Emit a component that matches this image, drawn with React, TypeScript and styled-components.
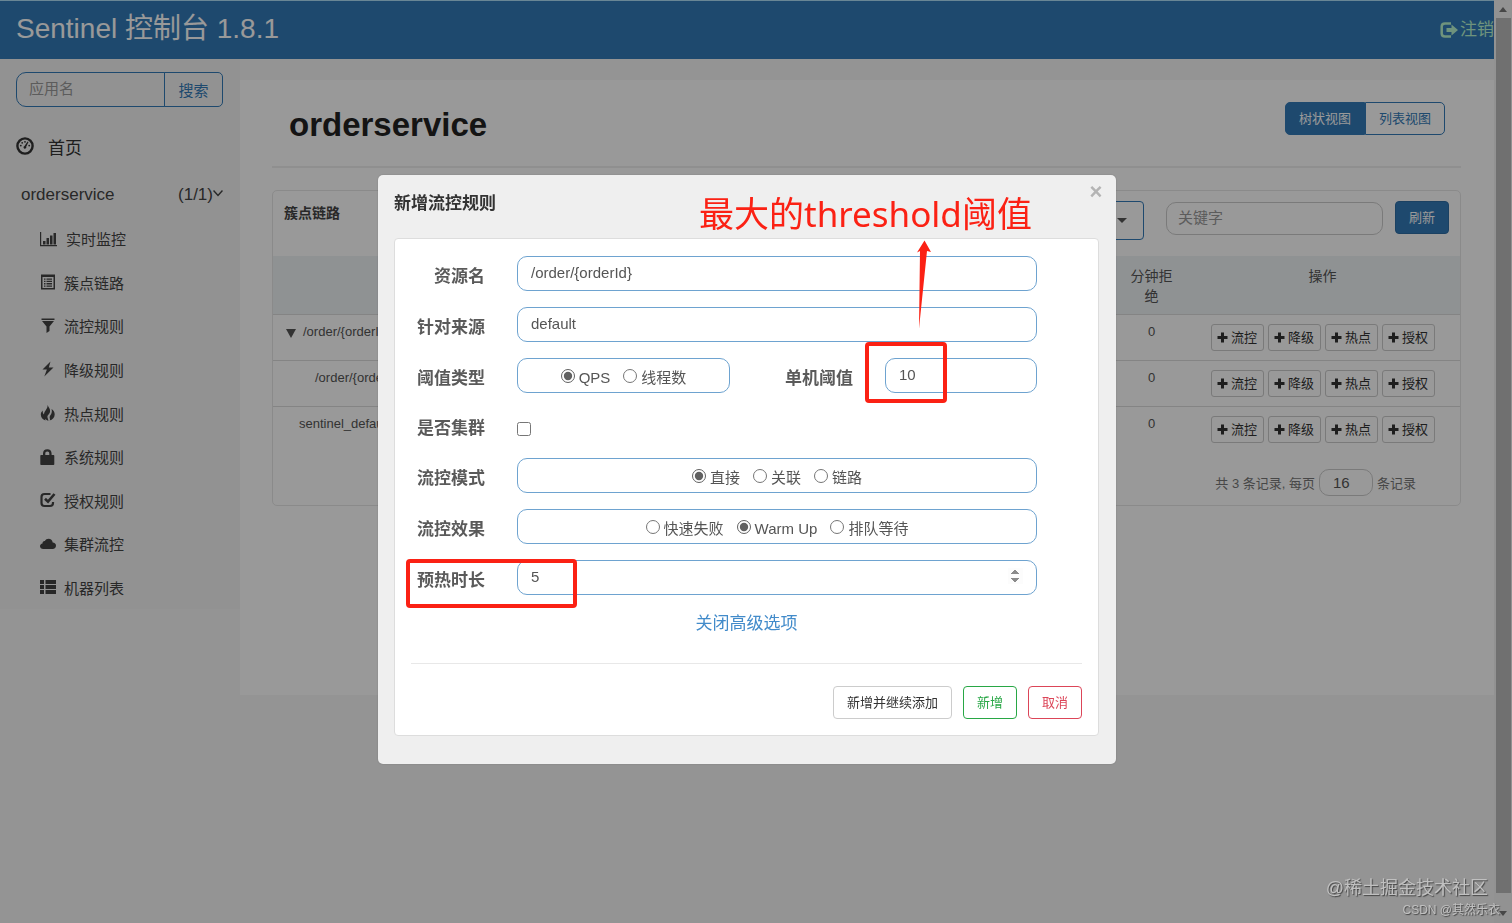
import React from "react";
import styled, { createGlobalStyle } from "styled-components";

const BLUE = "#337ab7";
const RED = "#fb2114";

const GlobalStyle = createGlobalStyle`
  * { box-sizing: border-box; }
  body {
    margin: 0;
    background: #f7f7f7;
    color: #333;
    font-family: "Liberation Sans", "Noto Sans CJK SC", sans-serif;
    font-size: 15px;
  }
  button, input, select { font-family: inherit; }
`;

/* ---------- icons ---------- */

const Icon = styled.svg<{ $size?: number }>`
  flex: none;
  display: block;
  width: ${(p) => p.$size ?? 16}px;
  height: ${(p) => p.$size ?? 16}px;
  fill: currentColor;
`;

const DashboardIcon = () => (
  <Icon $size={18} viewBox="0 0 18 18">
    <circle cx="9" cy="9" r="7.600" fill="none" stroke="currentColor" strokeWidth="2.400" />
    <circle cx="4.800" cy="8.600" r="0.900" />
    <circle cx="6.200" cy="5.800" r="0.900" />
    <circle cx="9" cy="4.800" r="0.900" />
    <circle cx="13.200" cy="8.600" r="0.900" />
    <path d="M11.600 4.600l.9.5-2.300 4.600a1.400 1.400 0 1 1-1.700-.8z" />
  </Icon>
);

const StatsIcon = () => (
  <Icon $size={18} viewBox="0 0 18 18">
    <path d="M0 2h1.200v13H17v1.200H0zM3 11h2.500v3.500H3zM6.500 8H9v6.500H6.500zM10 5.500h2.500v9H10zM13.500 3H16v11.500h-2.500z" />
  </Icon>
);

const ListAltIcon = () => (
  <Icon viewBox="0 0 16 16">
    <path
      fillRule="evenodd"
      d="M1 0.500h14v15H1zM2.500 3v11h11V3zM4 4.500h1.500v1.300H4zM6.500 4.500H12v1.300H6.500zM4 6.800h1.500v1.300H4zM6.500 6.800H12v1.300H6.500zM4 9.100h1.500v1.300H4zM6.500 9.100H12v1.300H6.500zM4 11.400h1.500v1.300H4zM6.500 11.400H12v1.300H6.500z"
    />
  </Icon>
);

const FilterIcon = () => (
  <Icon viewBox="0 0 16 16">
    <path d="M1.500 0.500h13v1.500H1.500zM2 3h12L9.500 8.500V13L6.500 15V8.500z" />
  </Icon>
);

const FlashIcon = () => (
  <Icon viewBox="0 0 16 16">
    <path d="M10.500 0.500L2.500 8.600h4.400L4.300 15.500 13.500 6.400H8.800z" />
  </Icon>
);

const FireIcon = () => (
  <Icon viewBox="0 0 16 16">
    <path d="M7.500 0C9 3 10.500 4 10 7c-.5 2.500-3 3-2.500 5.500.2 1.200.8 2 1 3.200-1.500-.3-2.500-1-3-2-.3.6-.2 1 0 1.700C2.500 14.500.8 12.300.8 9.500.8 8 1.500 6.600 2.800 5.500c-.2 2 .2 3.200 1.200 4C4 6 8 4 7.500 0z" />
    <path d="M11.500 4c2 1 3.200 3 3.200 5.300 0 3.200-2 5.500-5.200 6.200.8-.6.5-1.800.2-2.600-.4-1.600.6-2.500 1.500-4 .8-1.500.8-3.200.3-4.900z" />
  </Icon>
);

const LockIcon = () => (
  <Icon viewBox="0 0 16 16">
    <path d="M3 6V4.500C3 1.800 4.600.3 7.300.3s4.300 1.500 4.300 4.200V6h1.900c.5 0 .8.300.8.800v8.400c0 .5-.3.800-.8.800H1.100c-.5 0-.8-.3-.8-.8V6.800c0-.5.3-.8.8-.8zm2.300 0h4V4.600c0-1.400-.7-2.100-2-2.100s-2 .7-2 2.100z" />
  </Icon>
);

const CheckIcon = () => (
  <Icon viewBox="0 0 16 16">
    <path
      d="M10.500 2H4.500C2.500 2 1.500 3 1.500 5v6c0 2 1 3 3 3H10c2 0 3-1 3-3V10"
      fill="none"
      stroke="currentColor"
      strokeWidth="2.200"
    />
    <path d="M5 6.800l3 2.900L14.500 2" fill="none" stroke="currentColor" strokeWidth="2.600" />
  </Icon>
);

const CloudIcon = () => (
  <Icon viewBox="0 0 16 16">
    <path d="M3.200 13C1.400 13 0 11.800 0 10.200c0-1.500 1-2.600 2.500-2.800C2.400 5.700 3.600 4.700 4.900 5 5.700 3.500 7 2.700 8.500 2.700c2.300 0 4 1.600 4.200 3.900 1.900 0 3.300 1.300 3.300 3.100S14.600 13 12.700 13z" />
  </Icon>
);

const ThListIcon = () => (
  <Icon viewBox="0 0 16 16">
    <path d="M0 1h4v4H0zM5.500 1H16v4H5.500zM0 6h4v4H0zM5.500 6H16v4H5.500zM0 11h4v4H0zM5.500 11H16v4H5.500z" />
  </Icon>
);

const LogoutIcon = () => (
  <Icon $size={18} viewBox="0 0 18 18">
    <path
      d="M11 2.500H5C3 2.500 1.700 3.500 1.700 5.500v7c0 2 1.300 3 3.300 3h6"
      fill="none"
      stroke="currentColor"
      strokeWidth="2.500"
    />
    <path d="M6.500 7h5V3.500L18 9l-6.500 5.500V11h-5z" />
  </Icon>
);

const PlusIcon = () => (
  <Icon $size={11} viewBox="0 0 11 11">
    <path d="M4 0.500h3V4h3.500v3H7v3.500H4V7H0.500V4H4z" />
  </Icon>
);

const Chevron = styled.svg`
  width: 10px;
  height: 8px;
  margin-bottom: 5px;
  fill: none;
  stroke: currentColor;
  stroke-width: 1.5;
`;

/* ---------- page frame ---------- */

const Page = styled.div`
  min-height: 100vh;
  padding-right: 18px;
`;

const Header = styled.header`
  display: flex;
  justify-content: space-between;
  align-items: center;
  height: 59px;
  padding: 0 0 3px 16px;
  border-top: 1px solid #b0e0f8;
  background: ${BLUE};
`;

const Brand = styled.h1`
  margin: 0;
  font-size: 28px;
  font-weight: 400;
  line-height: 32px;
  color: #fff;
`;

const Logout = styled.a`
  display: flex;
  align-items: center;
  gap: 2px;
  padding-top: 2px;
  font-size: 17px;
  line-height: 24px;
  white-space: nowrap;
  color: #b9f5d0;
  text-decoration: none;
`;

const Body = styled.div`
  display: flex;
  align-items: flex-start;
`;

const Sidebar = styled.nav`
  flex: none;
  width: 240px;
  padding: 13px 17px 0 16px;
  background: #f4f4f4;
`;

const SearchGroup = styled.form`
  display: flex;
  height: 35px;
`;

const SearchInput = styled.input`
  flex: 1;
  min-width: 0;
  padding: 0 12px 2px;
  border: 1px solid ${BLUE};
  border-radius: 10px 0 0 10px;
  background: transparent;
  font-size: 15px;
  &::placeholder { color: #999; }
`;

const SearchButton = styled.button`
  width: 59px;
  margin-left: -1px;
  padding: 0;
  border: 1px solid ${BLUE};
  border-radius: 0 5px 5px 0;
  background: transparent;
  font-size: 15px;
  color: ${BLUE};
`;

const HomeLink = styled.a`
  display: flex;
  align-items: center;
  gap: 14px;
  height: 48px;
  margin-top: 15px;
  font-size: 17px;
  color: #333;
  text-decoration: none;
`;

const AppRow = styled.a`
  display: flex;
  justify-content: space-between;
  align-items: center;
  height: 47px;
  padding: 3px 0 0 5px;
  font-size: 17px;
  color: #444;
  text-decoration: none;
`;

const AppCount = styled.span`
  display: flex;
  align-items: center;
`;

const Menu = styled.ul`
  display: flex;
  flex-direction: column;
  height: 392px;
  margin: 0;
  padding: 0 0 0 24px;
  list-style: none;
`;

const MenuItem = styled.li`
  display: flex;
  flex: 1;
`;

const MenuLink = styled.a`
  display: flex;
  align-items: center;
  gap: 8px;
  font-size: 15px;
  color: #444;
  text-decoration: none;
`;

const Main = styled.main`
  flex: 1;
  min-width: 0;
  min-height: 615px;
  margin-top: 21px;
  padding: 0 33px 0 32px;
  background: #fff;
`;

const TitleBar = styled.div`
  display: flex;
  justify-content: space-between;
  align-items: flex-start;
  padding: 22px 16px 23px 17px;
  border-bottom: 2px solid #eee;
`;

const Title = styled.h2`
  margin: 0;
  padding-top: 5px;
  font-size: 33px;
  line-height: 36px;
  font-weight: 700;
  color: #222;
`;

const ViewSwitch = styled.div`
  display: flex;
`;

const ViewButton = styled.button<{ $active?: boolean }>`
  width: 80px;
  height: 33px;
  padding: 0 0 2px;
  border: 1px solid ${BLUE};
  border-radius: ${(p) => (p.$active ? "5px 0 0 5px" : "0 5px 5px 0")};
  background: ${(p) => (p.$active ? BLUE : "transparent")};
  color: ${(p) => (p.$active ? "#fff" : BLUE)};
  font-size: 13px;
`;

const Card = styled.section`
  margin-top: 22px;
  border: 1px solid #e7e7e7;
  border-radius: 5px;
`;

const Toolbar = styled.div`
  display: flex;
  align-items: flex-start;
  height: 65px;
  padding: 10px 11px 0;
`;

const CardTitle = styled.h3`
  flex: 1;
  margin: 0;
  font-size: 14px;
  line-height: 24px;
  color: #444;
`;

const SelectWrap = styled.label`
  display: grid;
  align-items: center;
  width: 260px;
  margin-right: 22px;
  > * { grid-area: 1 / 1; }
`;

const MachineSelect = styled.select`
  height: 39px;
  padding: 0 12px;
  border: 1px solid ${BLUE};
  border-radius: 4px;
  background: transparent;
  appearance: none;
  font-size: 15px;
  color: #444;
`;

const Caret = styled.svg`
  justify-self: end;
  width: 10px;
  height: 5px;
  margin-right: 17px;
  fill: #555;
  pointer-events: none;
`;

const KeywordInput = styled.input`
  width: 217px;
  height: 33px;
  margin: 1px 12px 0 0;
  padding: 0 11px 2px;
  border: 1px solid #ccc;
  border-radius: 10px;
  background: transparent;
  font-size: 15px;
  &::placeholder { color: #999; }
`;

const RefreshButton = styled.button`
  width: 54px;
  height: 33px;
  padding: 0 0 2px;
  border: 1px solid #2e6da4;
  border-radius: 4px;
  background: ${BLUE};
  color: #fff;
  font-size: 13px;
`;

const Table = styled.table`
  width: 100%;
  border-collapse: collapse;
  table-layout: fixed;
`;

const Th = styled.th<{ $width?: number }>`
  width: ${(p) => (p.$width ? `${p.$width}px` : "auto")};
  padding: 10px 12px 8px;
  background: #eff3f6;
  font-size: 14px;
  line-height: 20px;
  font-weight: 400;
  vertical-align: top;
  color: #555;
`;

const Td = styled.td<{ $indent?: number }>`
  height: 46px;
  padding: 7px 0 0 ${(p) => p.$indent ?? 0}px;
  border-top: 1px solid #ddd;
  font-size: 13px;
  line-height: 20px;
  text-align: ${(p) => (p.$indent ? "left" : "center")};
  vertical-align: top;
  white-space: nowrap;
  overflow: hidden;
  text-overflow: ellipsis;
  color: #555;
`;

const TreeToggle = styled.svg`
  width: 10px;
  height: 9px;
  margin: 0 7px 0 0;
  vertical-align: -2px;
  fill: #555;
`;

const Actions = styled.div`
  display: flex;
  justify-content: center;
  gap: 4px;
  padding-top: 2px;
`;

const ActionButton = styled.button`
  display: flex;
  align-items: center;
  justify-content: center;
  gap: 3px;
  width: 53px;
  height: 27px;
  padding: 0;
  border: 1px solid #ccc;
  border-radius: 3px;
  background: transparent;
  font-size: 13px;
  line-height: 18px;
  color: #333;
`;

const Pager = styled.div`
  display: flex;
  justify-content: flex-end;
  align-items: center;
  gap: 4px;
  padding: 16px 44px 9px 0;
  font-size: 13px;
  color: #777;
`;

const PageSizeInput = styled.input`
  width: 54px;
  height: 27px;
  padding: 0 13px;
  border: 1px solid #ccc;
  border-radius: 10px;
  background: transparent;
  font-size: 15px;
  color: #555;
`;

/* ---------- browser scroll bar ---------- */

const ScrollTrack = styled.div`
  position: fixed;
  inset: 0 0 0 auto;
  display: flex;
  flex-direction: column;
  align-items: center;
  justify-content: space-between;
  width: 18px;
  padding: 7px 0;
  background: #f4f4f4;
`;

const ScrollThumb = styled.div`
  flex: 1;
  width: 15px;
  margin: 6px 0 18px;
  background: #bbb;
`;

const ScrollArrow = styled.svg`
  width: 8px;
  height: 5px;
  fill: #777;
`;

/* ---------- dialog ---------- */

const Backdrop = styled.div`
  position: fixed;
  inset: 0;
  display: flex;
  align-items: flex-start;
  justify-content: center;
  padding: 175px 18px 0 0;
  background: rgba(0, 0, 0, 0.4);
`;

const Dialog = styled.div`
  position: relative;
  width: 738px;
  padding: 16px 17px 28px 16px;
  border-radius: 5px;
  background: #efefef;
  box-shadow: 0 0 2px rgba(0, 0, 0, 0.2);
`;

const DialogTitle = styled.h2`
  margin: 0 0 22px;
  font-size: 17px;
  line-height: 25px;
  color: #333;
`;

const CloseButton = styled.button`
  position: absolute;
  top: 8px;
  right: 11px;
  width: 18px;
  height: 18px;
  padding: 0;
  border: 0;
  background: none;
  color: #b4b4b4;
  font-size: 22px;
  line-height: 18px;
  font-weight: 700;
`;

const Panel = styled.form`
  padding: 17px 16px 16px;
  border: 1px solid #ddd;
  border-radius: 4px;
  background: #fff;
`;

const Fields = styled.div`
  display: flex;
  flex-direction: column;
  gap: 16px;
  padding-right: 45px;
`;

const Field = styled.div`
  display: grid;
  grid-template-columns: 74px 1fr;
  column-gap: 32px;
  align-items: center;
  min-height: 33px;
`;

const SplitField = styled(Field)`
  grid-template-columns: 74px 213px 91px 1fr;
`;

const FieldLabel = styled.label`
  padding-top: 6px;
  font-size: 17px;
  line-height: 24px;
  font-weight: 700;
  text-align: right;
  color: #5a5a5a;
`;

const TextInput = styled.input`
  width: 100%;
  height: 35px;
  padding: 0 13px 2px;
  border: 1px solid #6ea3d0;
  border-radius: 10px;
  background: #fff;
  font-size: 15px;
  color: #555;
  &::-webkit-inner-spin-button { opacity: 1; }
`;

const RadioBox = styled.div`
  display: flex;
  align-items: center;
  justify-content: center;
  gap: 13px;
  height: 35px;
  padding-top: 4px;
  border: 1px solid #6ea3d0;
  border-radius: 10px;
`;

const RadioLabel = styled.label`
  display: flex;
  align-items: center;
  gap: 4px;
  font-size: 15px;
  line-height: 20px;
  color: #555;
`;

const Radio = styled.input`
  width: 14px;
  height: 14px;
  margin: 0 0 3px;
  accent-color: #606060;
`;

const Checkbox = styled.input`
  width: 14px;
  height: 14px;
  margin: 6px 0 0;
`;

const AdvancedLink = styled.a`
  display: block;
  width: max-content;
  margin: 17px auto 0;
  font-size: 17px;
  line-height: 24px;
  color: #428bca;
  text-decoration: none;
`;

const Divider = styled.hr`
  height: 1px;
  margin: 27px 0 22px;
  border: 0;
  background: #e8e8e8;
`;

const Buttons = styled.div`
  display: flex;
  justify-content: flex-end;
  gap: 11px;
`;

const DialogButton = styled.button<{ $color: string; $border: string }>`
  min-width: 54px;
  height: 33px;
  padding: 0 13px 2px;
  border: 1px solid ${(p) => p.$border};
  border-radius: 4px;
  background: #fff;
  font-size: 13px;
  color: ${(p) => p.$color};
`;

/* ---------- notes drawn over the dialog ---------- */

const NoteText = styled.span`
  position: absolute;
  top: 15px;
  left: 321px;
  font-family: "Noto Sans", "Noto Sans CJK SC", sans-serif;
  font-size: 35px;
  line-height: 48px;
  white-space: nowrap;
  color: ${RED};
`;

const NoteArrow = styled.svg`
  position: absolute;
  top: 65px;
  left: 538px;
  width: 16px;
  height: 90px;
  fill: ${RED};
`;

const NoteFrame = styled.div<{ $x: number; $y: number; $w: number; $h: number }>`
  position: absolute;
  left: ${(p) => p.$x}px;
  top: ${(p) => p.$y}px;
  width: ${(p) => p.$w}px;
  height: ${(p) => p.$h}px;
  border: 4px solid ${RED};
  border-radius: 4px;
  pointer-events: none;
`;

const Watermarks = styled.div`
  position: fixed;
  right: 12px;
  bottom: 4px;
  display: flex;
  flex-direction: column;
  align-items: flex-end;
  color: #c0c0c0;
  text-shadow: 1px 1px 1px #444;
`;

const SiteMark = styled.span`
  margin-right: 12px;
  font-size: 18px;
  line-height: 26px;
`;

const AuthorMark = styled.span`
  font-size: 12px;
  line-height: 18px;
`;

const menu = [
  { label: "实时监控", icon: <StatsIcon /> },
  { label: "簇点链路", icon: <ListAltIcon /> },
  { label: "流控规则", icon: <FilterIcon /> },
  { label: "降级规则", icon: <FlashIcon /> },
  { label: "热点规则", icon: <FireIcon /> },
  { label: "系统规则", icon: <LockIcon /> },
  { label: "授权规则", icon: <CheckIcon /> },
  { label: "集群流控", icon: <CloudIcon /> },
  { label: "机器列表", icon: <ThListIcon /> },
];

const resources = [
  { name: "/order/{orderId}", indent: 13, open: true },
  { name: "/order/{orderId}", indent: 42, open: false },
  { name: "sentinel_default_context", indent: 26, open: false },
];

const actions = ["流控", "降级", "热点", "授权"];

function RadioGroup({ name, label, options, selected }: { name: string; label: string; options: string[]; selected: string }) {
  return (
    <RadioBox role="radiogroup" aria-label={label}>
      {options.map((o) => (
        <RadioLabel key={o}>
          <Radio type="radio" name={name} defaultChecked={o === selected} />
          {o}
        </RadioLabel>
      ))}
    </RadioBox>
  );
}

function RuleDialog() {
  return (
    <Backdrop>
      <Dialog role="dialog" aria-modal="true" aria-labelledby="rule-title">
        <DialogTitle id="rule-title">新增流控规则</DialogTitle>
        <CloseButton type="button">×</CloseButton>
        <Panel onSubmit={(e) => e.preventDefault()}>
          <Fields>
            <Field>
              <FieldLabel htmlFor="resource">资源名</FieldLabel>
              <TextInput id="resource" defaultValue="/order/{orderId}" />
            </Field>
            <Field>
              <FieldLabel htmlFor="origin">针对来源</FieldLabel>
              <TextInput id="origin" defaultValue="default" />
            </Field>
            <SplitField>
              <FieldLabel as="span">阈值类型</FieldLabel>
              <RadioGroup name="grade" label="阈值类型" options={["QPS", "线程数"]} selected="QPS" />
              <FieldLabel htmlFor="count">单机阈值</FieldLabel>
              <TextInput id="count" defaultValue="10" />
            </SplitField>
            <Field>
              <FieldLabel htmlFor="cluster">是否集群</FieldLabel>
              <Checkbox id="cluster" type="checkbox" />
            </Field>
            <Field>
              <FieldLabel as="span">流控模式</FieldLabel>
              <RadioGroup name="strategy" label="流控模式" options={["直接", "关联", "链路"]} selected="直接" />
            </Field>
            <Field>
              <FieldLabel as="span">流控效果</FieldLabel>
              <RadioGroup name="behavior" label="流控效果" options={["快速失败", "Warm Up", "排队等待"]} selected="Warm Up" />
            </Field>
            <Field>
              <FieldLabel htmlFor="warmup">预热时长</FieldLabel>
              <TextInput id="warmup" type="number" defaultValue="5" />
            </Field>
          </Fields>
          <AdvancedLink href="#">关闭高级选项</AdvancedLink>
          <Divider />
          <Buttons>
            <DialogButton type="button" $color="#333" $border="#ccc">新增并继续添加</DialogButton>
            <DialogButton type="submit" $color="#28a745" $border="#28a745">新增</DialogButton>
            <DialogButton type="button" $color="#dc4558" $border="#dc4558">取消</DialogButton>
          </Buttons>
        </Panel>
        <NoteText>最大的threshold阈值</NoteText>
        <NoteArrow viewBox="0 0 16 90">
          <path d="M8.500 0.500L15 12l-4-1L3 88.500 4 11 1 12.500z" />
        </NoteArrow>
        <NoteFrame $x={487} $y={167} $w={82} $h={61} />
        <NoteFrame $x={28} $y={384} $w={171} $h={49} />
      </Dialog>
    </Backdrop>
  );
}

export default function App() {
  return (
    <>
      <GlobalStyle />
      <Page>
        <Header>
          <Brand>Sentinel 控制台 1.8.1</Brand>
          <Logout href="#">
            <LogoutIcon />
            注销
          </Logout>
        </Header>
        <Body>
          <Sidebar>
            <SearchGroup onSubmit={(e) => e.preventDefault()}>
              <SearchInput placeholder="应用名" aria-label="应用名" />
              <SearchButton type="submit">搜索</SearchButton>
            </SearchGroup>
            <HomeLink href="#">
              <DashboardIcon />
              首页
            </HomeLink>
            <AppRow href="#">
              orderservice
              <AppCount>
                (1/1)
                <Chevron viewBox="0 0 10 8">
                  <path d="M0.500 1.500L5 6.500 9.500 1.500" />
                </Chevron>
              </AppCount>
            </AppRow>
            <Menu>
              {menu.map((m) => (
                <MenuItem key={m.label}>
                  <MenuLink href="#">
                    {m.icon}
                    {m.label}
                  </MenuLink>
                </MenuItem>
              ))}
            </Menu>
          </Sidebar>
          <Main>
            <TitleBar>
              <Title>orderservice</Title>
              <ViewSwitch>
                <ViewButton type="button" $active>树状视图</ViewButton>
                <ViewButton type="button">列表视图</ViewButton>
              </ViewSwitch>
            </TitleBar>
            <Card>
              <Toolbar>
                <CardTitle>簇点链路</CardTitle>
                <SelectWrap>
                  <MachineSelect aria-label="机器">
                    <option></option>
                  </MachineSelect>
                  <Caret viewBox="0 0 10 5">
                    <path d="M0 0h10L5 5z" />
                  </Caret>
                </SelectWrap>
                <KeywordInput placeholder="关键字" aria-label="关键字" />
                <RefreshButton type="button">刷新</RefreshButton>
              </Toolbar>
              <Table>
                <thead>
                  <tr>
                    <Th $width={130} />
                    <Th />
                    <Th $width={67}>分钟拒绝</Th>
                    <Th $width={275}>操作</Th>
                  </tr>
                </thead>
                <tbody>
                  {resources.map((r, i) => (
                    <tr key={i}>
                      <Td $indent={r.indent}>
                        {r.open && (
                          <TreeToggle viewBox="0 0 10 9">
                            <path d="M0 0h10L5 9z" />
                          </TreeToggle>
                        )}
                        {r.name}
                      </Td>
                      <Td />
                      <Td>0</Td>
                      <Td>
                        <Actions>
                          {actions.map((a) => (
                            <ActionButton key={a} type="button">
                              <PlusIcon />
                              {a}
                            </ActionButton>
                          ))}
                        </Actions>
                      </Td>
                    </tr>
                  ))}
                </tbody>
              </Table>
              <Pager>
                <span>共 3 条记录, 每页</span>
                <PageSizeInput defaultValue="16" aria-label="每页记录数" />
                <span>条记录</span>
              </Pager>
            </Card>
          </Main>
        </Body>
      </Page>
      <ScrollTrack>
        <ScrollArrow viewBox="0 0 8 5">
          <path d="M0 5h8L4 0z" />
        </ScrollArrow>
        <ScrollThumb />
        <ScrollArrow viewBox="0 0 8 5">
          <path d="M0 0h8L4 5z" />
        </ScrollArrow>
      </ScrollTrack>
      <RuleDialog />
      <Watermarks>
        <SiteMark>@稀土掘金技术社区</SiteMark>
        <AuthorMark>CSDN @其然乐衣</AuthorMark>
      </Watermarks>
    </>
  );
}
